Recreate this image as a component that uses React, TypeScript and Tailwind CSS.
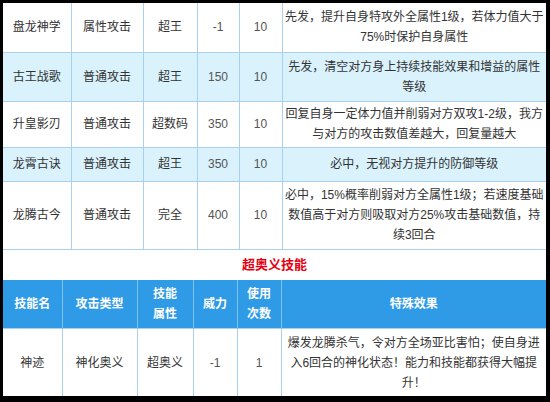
const font = { fontFamily: '"Liberation Sans", "Noto Sans CJK SC", sans-serif' };

type Row = {
  name: string;
  type: string;
  attr: string;
  power: string;
  uses: string;
  effect: string[];
  h: string;
  alt?: boolean;
};

const rows: Row[] = [
  {
    name: "盘龙神学",
    type: "属性攻击",
    attr: "超王",
    power: "-1",
    uses: "10",
    effect: ["先发，提升自身特攻外全属性1级，若体力值大于", "75%时保护自身属性"],
    h: "h-[49px]",
  },
  {
    name: "古王战歌",
    type: "普通攻击",
    attr: "超王",
    power: "150",
    uses: "10",
    effect: ["先发，清空对方身上持续技能效果和增益的属性", "等级"],
    h: "h-[49px]",
    alt: true,
  },
  {
    name: "升皇影刃",
    type: "普通攻击",
    attr: "超数码",
    power: "350",
    uses: "10",
    effect: ["回复自身一定体力值并削弱对方双攻1-2级，我方", "与对方的攻击数值差越大，回复量越大"],
    h: "h-[46px]",
  },
  {
    name: "龙霄古诀",
    type: "普通攻击",
    attr: "超王",
    power: "350",
    uses: "10",
    effect: ["必中，无视对方提升的防御等级"],
    h: "h-[34px]",
    alt: true,
  },
  {
    name: "龙腾古今",
    type: "普通攻击",
    attr: "完全",
    power: "400",
    uses: "10",
    effect: ["必中，15%概率削弱对方全属性1级；若速度基础", "数值高于对方则吸取对方25%攻击基础数值，持", "续3回合"],
    h: "h-[68px]",
  },
];

function Lines({ lines }: { lines: string[] }) {
  return (
    <>
      {lines.map((l, i) => (
        <div key={i} className="whitespace-nowrap leading-[20px]">
          {l}
        </div>
      ))}
    </>
  );
}

const cell = "border border-[#a9d0f1] text-center align-middle p-0";

export default function App() {
  return (
    <div
      className="w-[550px] h-[402px] bg-black pt-[3px] pl-[3px] pr-[4px] pb-[6px] overflow-hidden"
      style={font}
    >
      <div className="w-[543px] h-[393px] bg-white overflow-hidden text-[12px] text-[#333]">
        <table className="table-fixed border-collapse w-[543px]">
          <colgroup>
            <col className="w-[68px]" />
            <col className="w-[72px]" />
            <col className="w-[54px]" />
            <col className="w-[42px]" />
            <col className="w-[43px]" />
            <col className="w-[264px]" />
          </colgroup>
          <tbody>
            {rows.map((r, i) => (
              <tr key={i} className={`${r.h} ${r.alt ? "bg-[#d9f2fc]" : "bg-white"}`}>
                <td className={`${cell} border-t-0 border-l-0`}>{r.name}</td>
                <td className={`${cell} border-t-0`}>{r.type}</td>
                <td className={`${cell} border-t-0`}>{r.attr}</td>
                <td className={`${cell} border-t-0 text-[#555]`}>{r.power}</td>
                <td className={`${cell} border-t-0 text-[#555]`}>{r.uses}</td>
                <td className={`${cell} border-t-0 border-r-0`}>
                  <Lines lines={r.effect} />
                </td>
              </tr>
            ))}
          </tbody>
        </table>

        <div className="h-[30px] flex items-center justify-center text-[13px] font-bold text-[#e60012]">
          超奥义技能
        </div>

        <table className="table-fixed border-collapse w-[543px]">
          <colgroup>
            <col className="w-[59px]" />
            <col className="w-[75px]" />
            <col className="w-[56px]" />
            <col className="w-[44px]" />
            <col className="w-[44px]" />
            <col className="w-[265px]" />
          </colgroup>
          <tbody>
            <tr className="h-[49px] bg-[#2f9be6] text-white font-bold">
              <td className="border-r border-[#7fc2f0] text-center leading-[20px]">技能名</td>
              <td className="border-r border-[#7fc2f0] text-center leading-[20px]">攻击类型</td>
              <td className="border-r border-[#7fc2f0] text-center leading-[20px]">
                技能
                <br />
                属性
              </td>
              <td className="border-r border-[#7fc2f0] text-center leading-[20px]">威力</td>
              <td className="border-r border-[#7fc2f0] text-center leading-[20px]">
                使用
                <br />
                次数
              </td>
              <td className="text-center leading-[20px]">特殊效果</td>
            </tr>
            <tr className="h-[68px] bg-white">
              <td className={`${cell} border-l-0 border-b-0`}>神迹</td>
              <td className={`${cell} border-b-0`}>神化奥义</td>
              <td className={`${cell} border-b-0`}>超奥义</td>
              <td className={`${cell} border-b-0 text-[#555]`}>-1</td>
              <td className={`${cell} border-b-0 text-[#555]`}>1</td>
              <td className={`${cell} border-r-0 border-b-0`}>
                <Lines
                  lines={[
                    "爆发龙腾杀气，令对方全场亚比害怕；使自身进",
                    "入6回合的神化状态！能力和技能都获得大幅提",
                    "升！",
                  ]}
                />
              </td>
            </tr>
          </tbody>
        </table>
      </div>
    </div>
  );
}
